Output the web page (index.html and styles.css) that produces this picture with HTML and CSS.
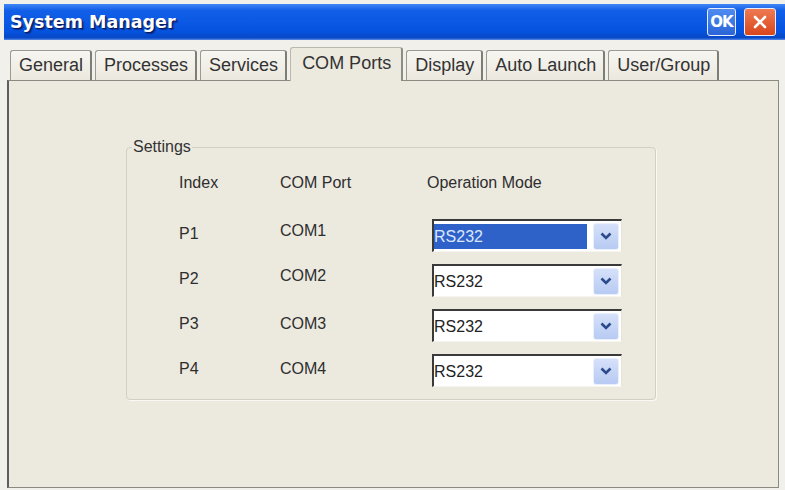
FILE: index.html
```html
<!DOCTYPE html>
<html lang="en">
<head>
  <meta charset="UTF-8">
  <title>System Manager</title>
  <link rel="stylesheet" href="styles.css">
</head>
<body>
  <div class="window">
    <div class="titlebar">
      <span class="title">System Manager</span>
      <span class="cap-btn ok-btn">OK</span>
      <span class="cap-btn close-btn">
        <svg width="14" height="14" viewBox="0 0 14 14"><path d="M2 2 L12 12 M12 2 L2 12" stroke="#fff" stroke-width="2.6" stroke-linecap="round"/></svg>
      </span>
    </div>

    <div class="tabs">
      <span class="tab">General</span>
      <span class="tab">Processes</span>
      <span class="tab">Services</span>
      <span class="tab active">COM Ports</span>
      <span class="tab">Display</span>
      <span class="tab">Auto Launch</span>
      <span class="tab">User/Group</span>
    </div>

    <div class="panel">
      <fieldset class="settings">
        <legend>Settings</legend>
        <div class="port-grid">
          <div class="head">Index</div>
          <div class="head">COM Port</div>
          <div class="head">Operation Mode</div>

          <div class="cell">P1</div>
          <div class="cell up">COM1</div>
          <div class="combo">
            <span class="value selected">RS232</span>
            <span class="drop"><svg width="12" height="8" viewBox="0 0 12 8"><path d="M1.5 1.5 L6 6 L10.5 1.5" fill="none" stroke="#2c4a8c" stroke-width="2.6"/></svg></span>
          </div>

          <div class="cell">P2</div>
          <div class="cell up">COM2</div>
          <div class="combo">
            <span class="value">RS232</span>
            <span class="drop"><svg width="12" height="8" viewBox="0 0 12 8"><path d="M1.5 1.5 L6 6 L10.5 1.5" fill="none" stroke="#2c4a8c" stroke-width="2.6"/></svg></span>
          </div>

          <div class="cell">P3</div>
          <div class="cell">COM3</div>
          <div class="combo">
            <span class="value">RS232</span>
            <span class="drop"><svg width="12" height="8" viewBox="0 0 12 8"><path d="M1.5 1.5 L6 6 L10.5 1.5" fill="none" stroke="#2c4a8c" stroke-width="2.6"/></svg></span>
          </div>

          <div class="cell">P4</div>
          <div class="cell">COM4</div>
          <div class="combo">
            <span class="value">RS232</span>
            <span class="drop"><svg width="12" height="8" viewBox="0 0 12 8"><path d="M1.5 1.5 L6 6 L10.5 1.5" fill="none" stroke="#2c4a8c" stroke-width="2.6"/></svg></span>
          </div>
        </div>
      </fieldset>
    </div>
  </div>
</body>
</html>
```

FILE: styles.css
```css
/* Base */
body {
  margin: 0;
  background-color: #f1f0ea;
  font-family: "Liberation Sans", Arial, sans-serif;
  color: #2e2e2e;
}

.window {
  padding-top: 4px;
}

/* Title bar */
.titlebar {
  margin-left: 4px;
  height: 36px;
  display: flex;
  align-items: center;
  padding-left: 6px;
  padding-right: 9px;
  background: linear-gradient(#3f86f4 0%, #125fe8 18%, #0553e0 75%, #0847c6 94%, #5b8fe8 100%);
}

.title {
  flex: 1;
  font-family: "DejaVu Sans", sans-serif;
  font-weight: bold;
  font-size: 17.5px;
  color: #fff;
  text-shadow: 1px 1px 0 #0a1a5c, 2px 2px 1px rgba(10, 26, 92, 0.6);
}

.cap-btn {
  display: flex;
  align-items: center;
  justify-content: center;
  width: 29px;
  height: 28px;
  box-sizing: border-box;
  border: 1px solid #e8eefc;
  border-radius: 3px;
}

.ok-btn {
  background: linear-gradient(#4f8cf0, #2a64d8);
  color: #fff;
  font-family: "DejaVu Sans", sans-serif;
  font-weight: bold;
  font-size: 15px;
  letter-spacing: -1px;
  margin-right: 8px;
}

.close-btn {
  width: 32px;
  background: linear-gradient(#ef7a52, #d9461c);
}

/* Tabs */
.tabs {
  display: flex;
  align-items: flex-end;
  gap: 3px;
  padding-left: 10px;
  margin-top: 7px;
  position: relative;
  z-index: 1;
}

.tab {
  height: 30px;
  line-height: 29px;
  padding: 0 7px 0 8px;
  box-sizing: border-box;
  font-size: 18px;
  color: #333;
  background: linear-gradient(#f7f6f1, #ebe8de);
  border: 1px solid #9a9a90;
  border-right: 2px solid #7d7d75;
  border-bottom: none;
  border-radius: 3px 3px 0 0;
}

.tab.active {
  height: 34px;
  padding: 0 10px 0 11px;
  line-height: 31px;
  background: #ece9df;
  margin-bottom: -1px;
  border-color: #b8b8ac;
  border-right-color: #8d8d84;
}

/* Panel */
.panel {
  margin-left: 7px;
  width: 772px;
  height: 408px;
  box-sizing: border-box;
  background-color: #ece9df;
  border: 1px solid #8a8a82;
  border-left: 2px solid #5e5e5e;
  padding: 57px 0 0 117px;
}

.settings {
  width: 530px;
  box-sizing: border-box;
  margin: 0;
  padding: 18px 0 12px 0;
  border: 1px solid #d2d0c4;
  border-radius: 4px;
  box-shadow: 1px 1px 0 #f9f8f3;
}

.settings legend {
  font-size: 16px;
  padding: 0 1px;
  margin-left: 5px;
  color: #333;
}

.port-grid {
  display: grid;
  grid-template-columns: 101px 147px 195px;
  row-gap: 12px;
  align-items: center;
  padding-left: 52px;
  font-size: 16px;
}

.head {
  margin-bottom: 15px;
}

.cell {
  padding-bottom: 4px;
}

.cell.up {
  padding-bottom: 9px;
}

/* Combo box */
.combo {
  margin-left: 5px;
  width: 190px;
  height: 33px;
  box-sizing: border-box;
  display: flex;
  align-items: center;
  background: #fff;
  border-top: 2px solid #3a3a3a;
  border-left: 2px solid #3a3a3a;
  border-right: 1px solid #e6e4da;
  border-bottom: 1px solid #f6f5f0;
  padding: 2px 2px 2px 0;
}

.value {
  flex: 1;
  height: 25px;
  line-height: 25px;
  margin-right: 6px;
  color: #222;
}

.value.selected {
  background-color: #2f62c8;
  color: #dce6ff;
}

.drop {
  width: 26px;
  height: 27px;
  box-sizing: border-box;
  display: flex;
  align-items: center;
  justify-content: center;
  background: linear-gradient(#d6e1fa, #b7caf2);
  border: 1px solid #e9effc;
  border-radius: 3px;
}
```
